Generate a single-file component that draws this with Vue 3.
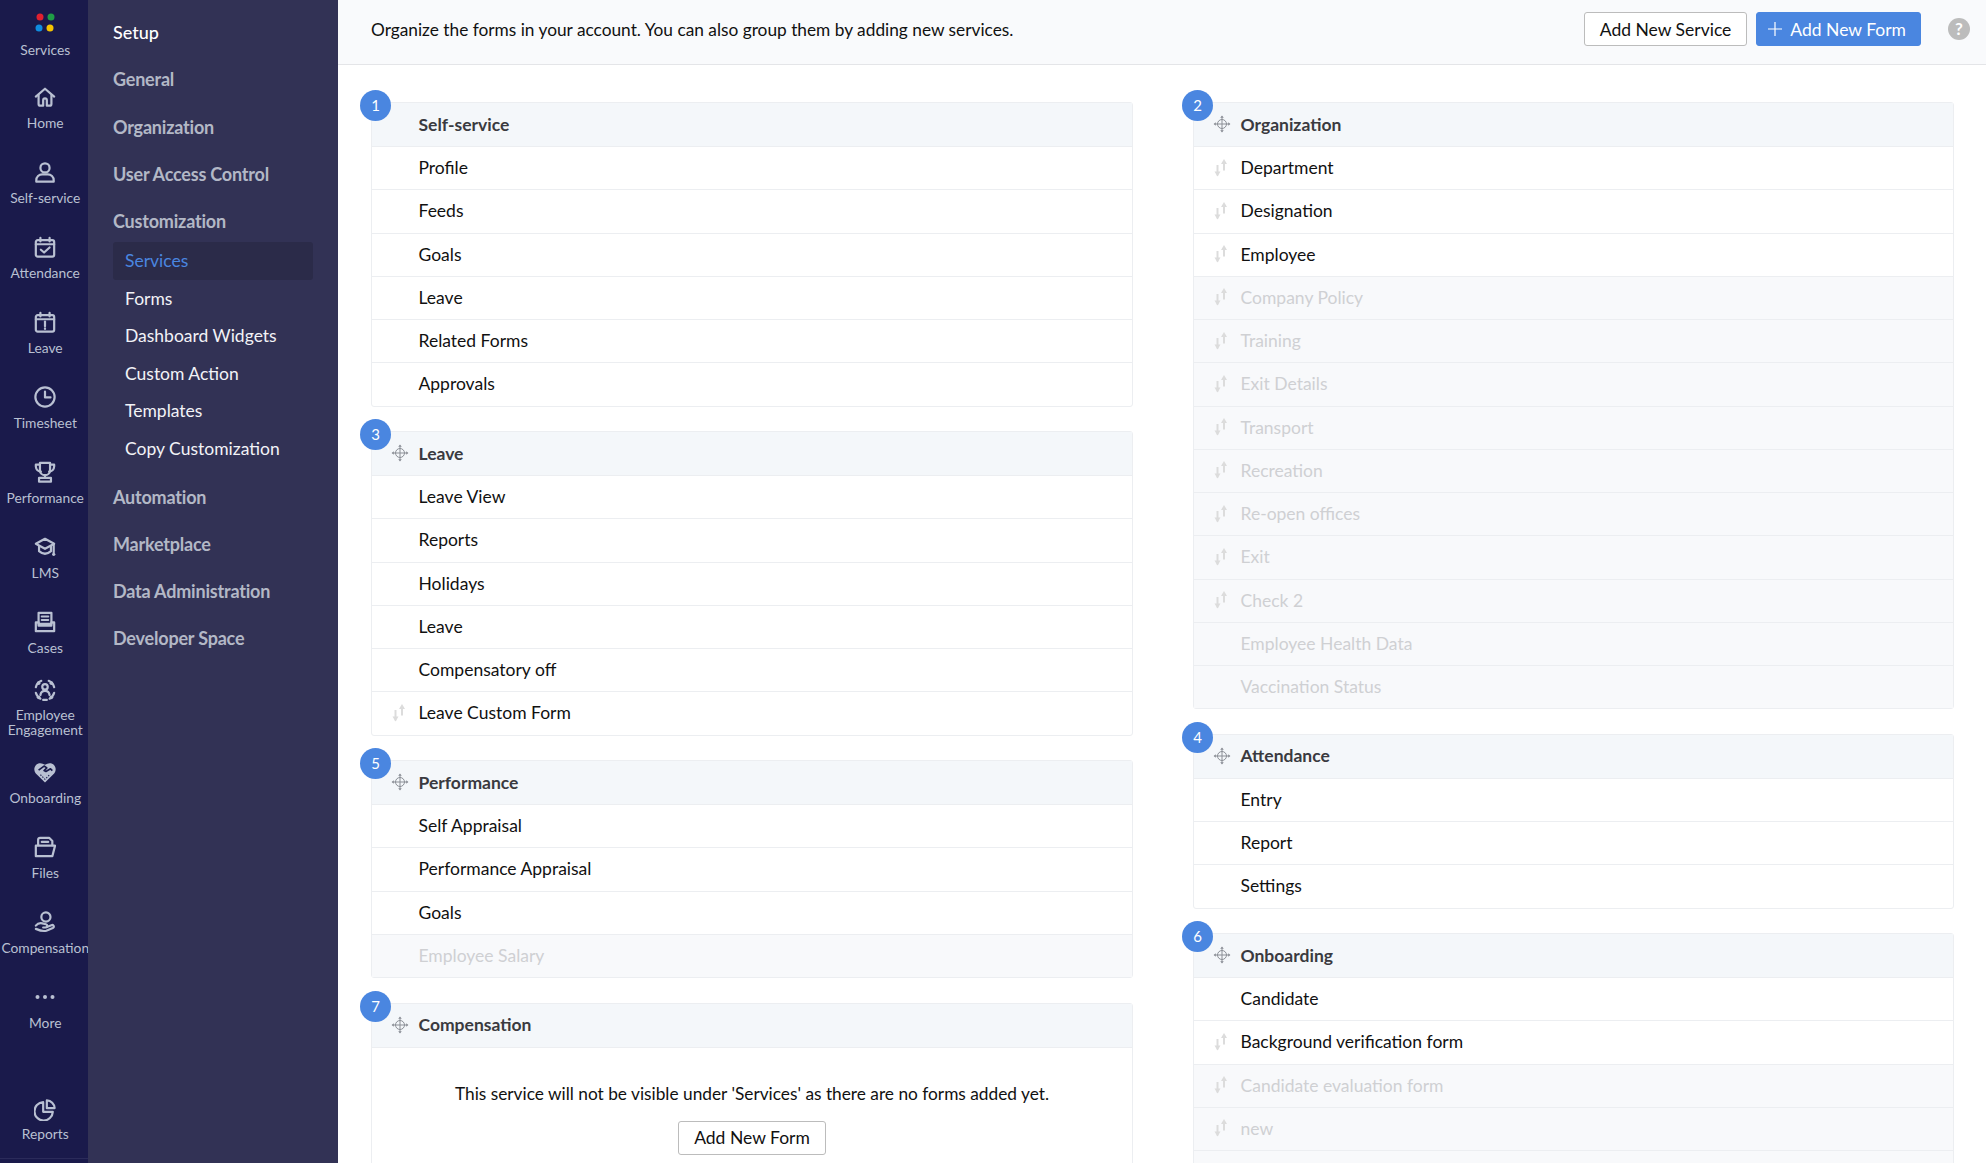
<script setup>
const circle = (x, y, r) => `M${x - r} ${y}a${r} ${r} 0 1 0 ${2 * r} 0a${r} ${r} 0 1 0 ${-2 * r} 0z`

const rail = [
  { label: 'Home', d: ['M2 11.500 12 3l10 8.500', 'M5 10v9.500a2 2 0 0 0 2 2h3v-6a2 2 0 0 1 4 0v6h3a2 2 0 0 0 2-2V10'] },
  { label: 'Self-service', d: [circle(12, 7.5, 5), 'M2.500 22.500v-1.500a6.500 6.500 0 0 1 6.500-6.500h6a6.500 6.500 0 0 1 6.500 6.500v1.500z'] },
  { label: 'Attendance', d: ['M4 4.500h16a2 2 0 0 1 2 2v14a2 2 0 0 1-2 2H4a2 2 0 0 1-2-2v-14a2 2 0 0 1 2-2z', 'M2 9h20', 'M7 2v4M17 2v4', 'M7.500 15l3.500 3 6-5.500'] },
  { label: 'Leave', d: ['M4 4.500h16a2 2 0 0 1 2 2v14a2 2 0 0 1-2 2H4a2 2 0 0 1-2-2v-14a2 2 0 0 1 2-2z', 'M2 9h20', 'M7 2v4M17 2v4', 'M12 11.500v5', 'M12 18.800v.7'] },
  { label: 'Timesheet', d: [circle(12, 12, 10.500), 'M12 6v6.500h6'] },
  { label: 'Performance', d: ['M6.500 2h11v8a5.500 5.500 0 0 1-11 0z', 'M6.500 4H2v2a6 6 0 0 0 5.500 5.500', 'M17.500 4H22v2a6 6 0 0 1-5.500 5.500', 'M12 15.500v3', 'M5.500 18.500h13v4h-13z'] },
  { label: 'LMS', d: ['M12 3 22 8.500 12 14 2 8.500z', 'M5.500 11v5.500c4 3.500 9 3.500 13 0V11', 'M21.500 9.500V18'], dots: [[21.5, 20, 1.8]] },
  { label: 'Cases', d: ['M5 2h14v12H5z', 'M8.500 6h7M8.500 9.800h7', 'M2 12.500V22h20v-9.500h-3v3.500H5v-3.500z'] },
  { label: 'Employee\nEngagement', two: true, d: [circle(12, 8.500, 3), 'M7 17.500c.5-3 2.500-4.500 5-4.500s4.500 1.500 5 4.500', 'M8 2a10.500 10.500 0 0 0-6 7', 'M16 2a10.500 10.500 0 0 1 6 7', 'M2 15a10.500 10.500 0 0 0 5 6.500', 'M22 15a10.500 10.500 0 0 1-5 6.500', 'M10 22.800h4'], dots: [[5, 4.5, 2], [19, 4.5, 2], [5, 20, 2], [19, 20, 2]] },
  { label: 'Onboarding', d: ['M12 23.500 2 13.500c-2.200-2.500-2.200-6.500 0-9 2.500-2.800 6.500-2.800 10-.5 3.500-2.300 7.500-2.300 10 .5 2.200 2.500 2.200 6.500 0 9z', 'M5 10l6-4.500 3 2-3 3 2 1 5-3 2 2', 'M7 15l5 5 5-5'], solid: true },
  { label: 'Files', d: ['M4.500 10V4a2 2 0 0 1 2-2h10L20 5.500V10', 'M8.500 6.500h7', 'M2 10.500h21L20 22H2z'] },
  { label: 'Compensation', d: [circle(13, 6.500, 5), 'M2 16c2-2.500 4.500-3 7-2.500l4 1c2 .5 2 3.500-.5 3.500H10', 'M14 17.500l5-2c2.500-1 3.500 2 1.500 3l-7 3c-3.500 1-7 0-11.500-2'] },
  { label: 'More', more: true, d: [] },
]
const reports = { label: 'Reports', d: ['M10 3.500a10 10 0 1 0 10.500 10.500H10z', 'M14 1.500a9 9 0 0 1 8.500 8.500H14z'] }

const setupGroups = ['General', 'Organization', 'User Access Control', 'Customization']
const subItems = ['Services', 'Forms', 'Dashboard Widgets', 'Custom Action', 'Templates', 'Copy Customization']
const lowerGroups = ['Automation', 'Marketplace', 'Data Administration', 'Developer Space']

const r = (name, sort = false, off = false) => ({ name, sort, off })

const leftCol = [
  { n: 1, title: 'Self-service', fixed: true, rows: ['Profile', 'Feeds', 'Goals', 'Leave', 'Related Forms', 'Approvals'].map((x) => r(x)) },
  { n: 3, title: 'Leave', rows: [...['Leave View', 'Reports', 'Holidays', 'Leave', 'Compensatory off'].map((x) => r(x)), r('Leave Custom Form', true)] },
  { n: 5, title: 'Performance', rows: [r('Self Appraisal'), r('Performance Appraisal'), r('Goals'), r('Employee Salary', false, true)] },
  { n: 7, title: 'Compensation', rows: [], empty: true },
]
const rightCol = [
  {
    n: 2, title: 'Organization',
    rows: [
      ...['Department', 'Designation', 'Employee'].map((x) => r(x, true)),
      ...['Company Policy', 'Training', 'Exit Details', 'Transport', 'Recreation', 'Re-open offices', 'Exit', 'Check 2'].map((x) => r(x, true, true)),
      r('Employee Health Data', false, true), r('Vaccination Status', false, true),
    ],
  },
  { n: 4, title: 'Attendance', rows: ['Entry', 'Report', 'Settings'].map((x) => r(x)) },
  { n: 6, title: 'Onboarding', rows: [r('Candidate'), r('Background verification form', true), r('Candidate evaluation form', true, true), r('new', true, true), r('', true, true)] },
]
const columns = [leftCol, rightCol]
</script>

<template>
  <div class="app">
    <nav class="rail">
      <div class="rail-item first">
        <svg class="rail-icon" viewBox="0 0 22 22" width="22" height="22">
          <circle cx="6" cy="6" r="3.500" fill="#e0202f" />
          <circle cx="17" cy="6" r="3.500" fill="#1f9d46" />
          <circle cx="5" cy="17" r="3.500" fill="#0f8de0" />
          <circle cx="16" cy="17" r="3.500" fill="#f5c400" />
        </svg>
        <span class="rail-label">Services</span>
      </div>
      <div v-for="item in rail" :key="item.label" class="rail-item" :class="{ two: item.two }">
        <svg v-if="item.more" class="rail-icon" viewBox="0 0 22 22" width="22" height="22">
          <circle cx="3.500" cy="11" r="2" fill="#b9c0d2" />
          <circle cx="11" cy="11" r="2" fill="#b9c0d2" />
          <circle cx="18.500" cy="11" r="2" fill="#b9c0d2" />
        </svg>
        <svg v-else class="rail-icon" viewBox="0 0 24 24" width="22" height="22">
          <g v-if="item.solid">
            <path :d="item.d[0]" fill="#b9c0d2" />
            <path :d="item.d[1]" fill="none" stroke="#1a1a4b" stroke-width="1.800" stroke-linejoin="round" />
            <path :d="item.d[2]" fill="none" stroke="#1a1a4b" stroke-width="1.200" stroke-dasharray="1.500 1.500" />
          </g>
          <g v-else fill="none" stroke="#b9c0d2" stroke-width="2.400" stroke-linecap="round" stroke-linejoin="round">
            <path v-for="p in item.d" :key="p" :d="p" />
          </g>
          <circle v-for="c in item.dots || []" :key="c.join()" :cx="c[0]" :cy="c[1]" :r="c[2]" fill="#b9c0d2" />
        </svg>
        <span class="rail-label">{{ item.label }}</span>
      </div>
      <div class="rail-item reports">
        <svg class="rail-icon" viewBox="0 0 24 24" width="22" height="22">
          <g fill="none" stroke="#b9c0d2" stroke-width="2.400" stroke-linejoin="round">
            <path v-for="p in reports.d" :key="p" :d="p" />
          </g>
        </svg>
        <span class="rail-label">{{ reports.label }}</span>
      </div>
      <div class="rail-foot"></div>
    </nav>

    <aside class="side">
      <div class="group title">Setup</div>
      <div v-for="g in setupGroups" :key="g" class="group">{{ g }}</div>
      <ul class="subs">
        <li v-for="(s, i) in subItems" :key="s" class="sub" :class="{ active: i === 0 }">{{ s }}</li>
      </ul>
      <div v-for="g in lowerGroups" :key="g" class="group">{{ g }}</div>
    </aside>

    <main class="main">
      <header class="bar">
        <p class="intro">Organize the forms in your account. You can also group them by adding new services.</p>
        <div class="actions">
          <button class="btn">Add New Service</button>
          <button class="btn primary">
            <svg viewBox="0 0 14 14" width="14" height="14"><path d="M7 0v14M0 7h14" stroke="#fff" stroke-width="1.200" fill="none" /></svg>
            Add New Form
          </button>
          <span class="help">?</span>
        </div>
      </header>

      <section class="board">
        <div v-for="(col, ci) in columns" :key="ci" class="col">
          <article v-for="card in col" :key="card.n" class="card">
            <span class="badge">{{ card.n }}</span>
            <div class="card-head">
              <span class="slot">
                <svg v-if="!card.fixed" viewBox="0 0 18 18" width="18" height="18" fill="none" stroke="#8b8f96" stroke-width="1">
                  <circle cx="9" cy="9" r="4.500" />
                  <path d="M9 1.500v15M1.500 9h15" />
                  <path d="M7.200 2.800 9 .6l1.800 2.200zM7.200 15.200 9 17.400l1.800-2.200zM2.800 7.200.6 9l2.200 1.800zM15.200 7.200 17.400 9l-2.200 1.800z" fill="#8b8f96" stroke="none" />
                </svg>
              </span>
              <span>{{ card.title }}</span>
            </div>
            <div v-for="(row, ri) in card.rows" :key="ri" class="row" :class="{ off: row.off }">
              <span class="slot">
                <svg v-if="row.sort" viewBox="0 0 13 18" width="13" height="18" fill="none">
                  <path d="M3.500 6v10.500" stroke="#dcdcdc" stroke-width="2" />
                  <path d="M.500 12.500h6L3.500 17.500z" fill="#dcdcdc" />
                  <path d="M10 3V11.500" stroke="#dcdcdc" stroke-width="2" />
                  <path d="M7 5h6L10 0z" fill="#dcdcdc" />
                </svg>
              </span>
              <span>{{ row.name }}</span>
            </div>
            <div v-if="card.empty" class="empty">
              <p>This service will not be visible under 'Services' as there are no forms added yet.</p>
              <button class="btn">Add New Form</button>
            </div>
          </article>
        </div>
      </section>
    </main>
  </div>
</template>

<style>
html, body { margin: 0; height: 100%; overflow: hidden; }
</style>

<style scoped>
.app {
  display: flex;
  width: 1986px;
  height: 1163px;
  overflow: hidden;
  font-family: Lato, "Open Sans", sans-serif;
  font-size: 16px;
  color: #111;
  background: #fff;
}
.rail {
  width: 88px;
  flex: none;
  display: flex;
  flex-direction: column;
  background: #1a1a4b;
}
.rail-item {
  height: 75px;
  box-sizing: border-box;
  flex: none;
  padding: 11px 0 0 2.500px;
  display: flex;
  flex-direction: column;
  align-items: center;
  gap: 7px;
}
.rail-item.first .rail-label { margin-top: 2px; }
.rail-item.two { padding-top: 4px; gap: 6px; }
.rail-item.reports { margin-top: auto; height: 70px; gap: 5px; }
.rail-foot { height: 4px; flex: none; border-top: 1px solid #2b2b5a; }
.rail-icon { flex: none; display: block; }
.rail-label {
  font-size: 13.800px;
  line-height: 15px;
  color: #b9c0d2;
  text-align: center;
  white-space: pre;
}
.side {
  width: 250px;
  flex: none;
  box-sizing: border-box;
  padding: 9px 25px 0;
  background: #323255;
}
.group {
  height: 47.300px;
  line-height: 47.300px;
  font-size: 18px;
  font-weight: 700;
  letter-spacing: -0.2px;
  color: #b3b8c6;
}
.group.title { color: #fff; font-weight: 500; letter-spacing: 0; }
.subs {
  list-style: none;
  margin: -3.500px 0 6px;
  padding: 0;
}
.sub {
  height: 37.600px;
  line-height: 37.600px;
  padding-left: 12px;
  font-size: 17.500px;
  color: #f2f3f7;
  border-radius: 3px;
}
.sub.active { background: #2b2b49; color: #4a86e0; }
.main {
  flex: 1;
  min-width: 0;
  display: flex;
  flex-direction: column;
}
.bar {
  height: 65px;
  flex: none;
  box-sizing: border-box;
  display: flex;
  align-items: center;
  justify-content: space-between;
  padding: 0 16px 6px 33px;
  background: #f9fafc;
  border-bottom: 1px solid #e4e5e8;
}
.intro { margin: 0; font-size: 17.300px; color: #111; }
.actions { display: flex; align-items: center; }
.btn {
  height: 34px;
  box-sizing: border-box;
  padding: 0 15px;
  border: 1px solid #bcbcbc;
  border-radius: 3px;
  background: #fff;
  color: #111;
  font: inherit;
  font-size: 17.500px;
  white-space: nowrap;
}
.btn.primary {
  display: flex;
  align-items: center;
  gap: 8px;
  margin-left: 9px;
  padding: 0 14px 0 11px;
  border-color: #4a86e0;
  background: #4a86e0;
  color: #fff;
}
.help {
  margin-left: 27px;
  width: 22px;
  height: 22px;
  border-radius: 50%;
  background: #bcbcbc;
  color: #fff;
  font-size: 17px;
  font-weight: 700;
  line-height: 22px;
  text-align: center;
}
.board {
  flex: 1;
  display: grid;
  grid-template-columns: 762px 761px;
  column-gap: 60px;
  padding: 37px 32px 0 33px;
  overflow: hidden;
}
.col {
  display: flex;
  flex-direction: column;
  gap: 24.500px;
}
.card {
  position: relative;
  flex: none;
  border: 1px solid #eceef1;
  border-radius: 3px;
}
.badge {
  position: absolute;
  left: -12px;
  top: -13px;
  width: 31px;
  height: 31px;
  border-radius: 50%;
  background: #4a86e0;
  color: #fff;
  font-size: 15px;
  line-height: 31px;
  text-align: center;
}
.card-head {
  height: 44px;
  box-sizing: border-box;
  display: flex;
  align-items: center;
  padding: 0 0 1px 19px;
  background: #f4f7fa;
  border-bottom: 1px solid #eceef1;
  font-size: 17.500px;
  font-weight: 700;
  color: #3a3a40;
}
.row {
  height: 43.250px;
  box-sizing: border-box;
  display: flex;
  align-items: center;
  padding: 0 0 1px 20px;
  border-bottom: 1px solid #eceef1;
  font-size: 17.500px;
}
.row:last-child { border-bottom: 0; height: 42.250px; }
.row.off { background: #f8f9fb; color: #cfd0d3; }
.slot {
  width: 26.500px;
  flex: none;
  display: flex;
  align-items: center;
}
.card-head .slot { width: 27.500px; }
.empty {
  display: flex;
  flex-direction: column;
  align-items: center;
  padding-top: 35px;
  font-size: 17.300px;
  height: 160px;
  box-sizing: border-box;
}
.empty p { margin: 0 0 17px; }
</style>
